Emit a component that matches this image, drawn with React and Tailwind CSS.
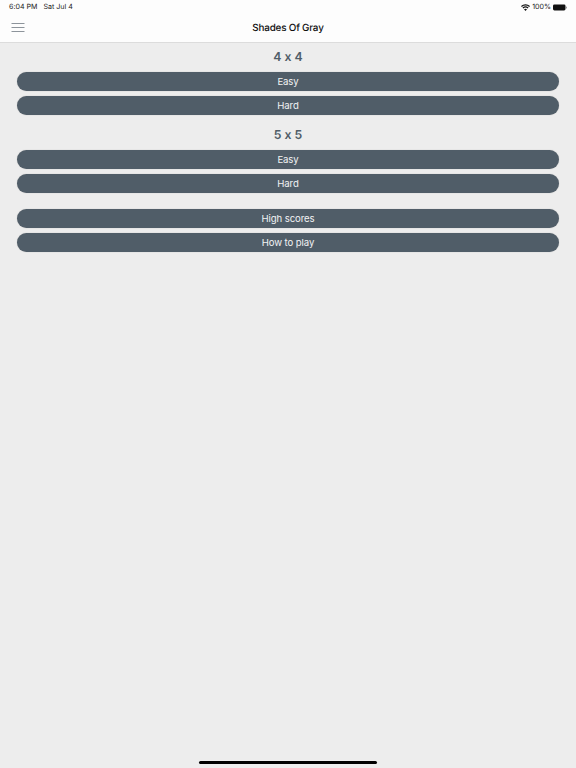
import React from "react";

function Btn({ children }) {
  return (
    <button className="block w-full h-[19px] rounded-full bg-[#505d68] text-[#f2f3f4] text-[9.6px] tracking-[-0.01em] leading-[19px] text-center shadow-[0_0_1px_rgba(0,0,0,0.3)]">
      {children}
    </button>
  );
}

function Heading({ children }) {
  return (
    <h2 className="h-[22px] text-[12.25px] leading-[22px] font-semibold text-center text-[#505d68]">
      {children}
    </h2>
  );
}

export default function App() {
  return (
    <div className="relative h-[768px] w-[576px] overflow-hidden bg-[#ededed] font-['Inter','Liberation_Sans',sans-serif] [text-rendering:geometricPrecision] [font-feature-settings:'calt'_0]">
      <header className="h-[43px] bg-[#fdfdfd] border-b border-[#dcdcdc]">
        <div className="flex h-[14px] items-center justify-between pl-[9px] pr-[9px] pt-[1px] text-[7.1px] text-[#222]">
          <div className="flex gap-[6px]">
            <span>6:04 PM</span>
            <span>Sat Jul 4</span>
          </div>
          <div className="flex items-center gap-[2px]">
            <svg width="9" height="7" viewBox="0 0 18 14" fill="#111">
              <path d="M9 14 L6 10.6 A4.6 4.6 0 0 1 12 10.6 Z" />
              <path d="M4.6 9 L3 7.2 A8.8 8.8 0 0 1 15 7.2 L13.4 9 A6.6 6.6 0 0 0 4.6 9 Z" />
              <path d="M1.7 5.8 L0 4 A13 13 0 0 1 18 4 L16.3 5.8 A10.8 10.8 0 0 0 1.7 5.8 Z" />
            </svg>
            <span>100%</span>
            <svg width="14" height="7" viewBox="0 0 14 7">
              <rect x="0" y="0.5" width="12.5" height="6" rx="1.4" fill="#111" />
              <rect x="13" y="2.5" width="1" height="2" rx="0.5" fill="#999" />
            </svg>
          </div>
        </div>
        <div className="relative flex h-[28px] items-center justify-center">
          <svg width="14" height="10" viewBox="0 0 14 10" className="absolute left-[11px] top-[9px]" stroke="#8d949b" strokeWidth="1" fill="none">
            <path d="M0.5 0.5H13.5M0.5 4.5H13.5M0.5 8.5H13.5" />
          </svg>
          <h1 className="text-[9.9px] font-medium tracking-[-0.02em] text-[#111]">Shades Of Gray</h1>
        </div>
      </header>
      <main className="px-[17px] pt-[2.5px]">
        <Heading>4 x 4</Heading>
        <div className="mt-[4px] flex flex-col gap-[5px]">
          <Btn>Easy</Btn>
          <Btn>Hard</Btn>
        </div>
        <div className="mt-[9px]">
          <Heading>5 x 5</Heading>
        </div>
        <div className="mt-[4px] flex flex-col gap-[5px]">
          <Btn>Easy</Btn>
          <Btn>Hard</Btn>
        </div>
        <div className="mt-[16px] flex flex-col gap-[5px]">
          <Btn>High scores</Btn>
          <Btn>How to play</Btn>
        </div>
      </main>
      <div className="absolute bottom-[4px] left-[199px] h-[3px] w-[178px] rounded-full bg-black" />
    </div>
  );
}
